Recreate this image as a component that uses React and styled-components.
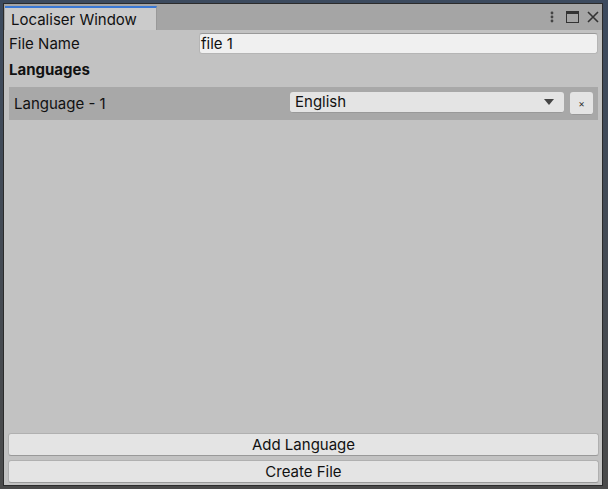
import React from 'react'
import styled, { createGlobalStyle } from 'styled-components'

const Global = createGlobalStyle`
  html, body { margin: 0; padding: 0; background: #3b4656; }
  body { font-family: Inter, "Noto Sans", Arial, sans-serif; }
  #root { width: 608px; height: 489px; }
`

const Frame = styled.div`
  width: 608px;
  height: 489px;
  box-sizing: border-box;
  padding: 3px 5px 3px 3px;
  background: linear-gradient(#3c4a5e, #4a4a4a);
`

const Window = styled.div`
  height: 100%;
  display: flex;
  flex-direction: column;
  background: #c2c2c2;
  border: 1px solid #2b2b2b;
  box-sizing: border-box;
`

const TabBar = styled.div`
  height: 25px;
  flex: none;
  display: flex;
  align-items: flex-end;
  background: #a5a5a5;
  padding-left: 1px;
  border-bottom: 1px solid #a5a5a5;
`

const Tab = styled.div`
  width: 152px;
  height: 24px;
  box-sizing: border-box;
  background: #cbcbcb;
  border-top: 2px solid #3a78d4;
  border-right: 1px solid #999;
  font-size: 15px;
  color: #111;
  padding: 2px 0 0 6px;
  margin-bottom: -1px;
`

const TabTools = styled.div`
  margin-left: auto;
  align-self: center;
  display: flex;
  align-items: center;
  gap: 12px;
  padding-right: 3px;
  color: #333;

  svg + svg + svg {
    margin-left: -4px;
  }
`

const Body = styled.div`
  flex: 1;
  display: flex;
  flex-direction: column;
  padding: 2px 3px 2px 4px;
`

const FieldRow = styled.div`
  display: flex;
  align-items: center;
  height: 22px;
  padding-left: 1px;
  font-size: 15px;
  color: #111;
`

const Label = styled.span`
  width: 190px;
  flex: none;
`

const Input = styled.div`
  flex: 1;
  height: 21px;
  box-sizing: border-box;
  background: #f0f0f0;
  border: 1px solid #b5b5b5;
  border-top-color: #999;
  border-radius: 3px;
  font-size: 15px;
  padding: 0 0 0 1px;
  margin-right: 1px;
`

const Heading = styled.div`
  font-size: 15px;
  font-weight: 700;
  color: #111;
  padding: 6px 0 0 1px;
  height: 22px;
`

const LangRow = styled.div`
  margin-top: 5px;
  height: 33px;
  background: #a8a8a8;
  display: flex;
  align-items: center;
  padding: 0 5px 0 5px;
  margin-left: 1px;
  margin-right: 1px;
  font-size: 15px;
  color: #111;
`

const LangLabel = styled.span`
  flex: 1;
`

const Select = styled.div`
  width: 274px;
  height: 21px;
  box-sizing: border-box;
  background: #e4e4e4;
  border-radius: 3px;
  border-bottom: 1px solid #999;
  display: flex;
  align-items: center;
  padding: 0 10px 0 5px;
  font-size: 15px;
  margin-top: -3px;
`

const Caret = styled.span`
  margin-left: auto;
  width: 0;
  height: 0;
  border-left: 5px solid transparent;
  border-right: 5px solid transparent;
  border-top: 6px solid #444;
`

const RemoveButton = styled.div`
  width: 23px;
  height: 23px;
  box-sizing: border-box;
  margin-left: 6px;
  background: #e4e4e4;
  border-radius: 3px;
  border-bottom: 1px solid #999;
  display: flex;
  align-items: center;
  justify-content: center;
  font-size: 10px;
  color: #333;
`

const Spacer = styled.div`
  flex: 1;
`

const Button = styled.div`
  height: 23px;
  box-sizing: border-box;
  background: #e4e4e4;
  border: 1px solid #b0b0b0;
  border-bottom-color: #999;
  border-radius: 3px;
  display: flex;
  align-items: center;
  justify-content: center;
  font-size: 15px;
  color: #111;

  & + & {
    margin-top: 4px;
  }
`

const Kebab = () => (
  <svg width="4" height="12" viewBox="0 0 4 12">
    <circle cx="2" cy="2" r="1.4" fill="#444" />
    <circle cx="2" cy="6" r="1.4" fill="#444" />
    <circle cx="2" cy="10" r="1.4" fill="#444" />
  </svg>
)

const Maximize = () => (
  <svg width="13" height="12" viewBox="0 0 13 12">
    <rect x="0.5" y="0.5" width="12" height="11" fill="none" stroke="#333" />
    <rect x="0.5" y="0.5" width="12" height="2.5" fill="#333" />
  </svg>
)

const Close = () => (
  <svg width="12" height="12" viewBox="0 0 12 12">
    <path d="M1 1 L11 11 M11 1 L1 11" stroke="#333" strokeWidth="1.6" />
  </svg>
)

export default function App() {
  return (
    <Frame>
      <Global />
      <Window>
        <TabBar>
          <Tab>Localiser Window</Tab>
          <TabTools>
            <Kebab />
            <Maximize />
            <Close />
          </TabTools>
        </TabBar>
        <Body>
          <FieldRow>
            <Label>File Name</Label>
            <Input>file 1</Input>
          </FieldRow>
          <Heading>Languages</Heading>
          <LangRow>
            <LangLabel>Language - 1</LangLabel>
            <Select>
              English
              <Caret />
            </Select>
            <RemoveButton>×</RemoveButton>
          </LangRow>
          <Spacer />
          <Button>Add Language</Button>
          <Button>Create File</Button>
        </Body>
      </Window>
    </Frame>
  )
}
